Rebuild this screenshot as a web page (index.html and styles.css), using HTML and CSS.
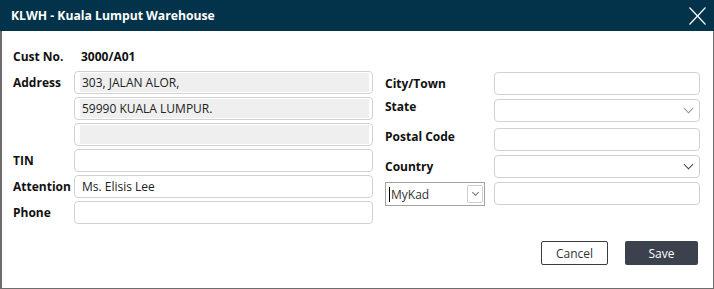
FILE: index.html
```html
<!DOCTYPE html>
<html lang="en">
<head>
  <meta charset="UTF-8" />
  <title>KLWH - Kuala Lumput Warehouse</title>
  <link rel="stylesheet" href="styles.css">
</head>
<body>
  <div class="dialog">
    <header class="titlebar">
      <h1>KLWH - Kuala Lumput Warehouse</h1>
      <button class="close" aria-label="Close">
        <svg width="17" height="18" viewBox="0 0 17 18">
          <path d="M0.5 0.5 L16.5 17.5 M16.5 0.5 L0.5 17.5" stroke="#fff" stroke-width="1.2" fill="none"/>
        </svg>
      </button>
    </header>

    <div class="content">
      <div class="col left">
        <label>Cust No.</label>
        <div class="value">3000/A01</div>

        <label>Address</label>
        <div class="field ro"><span>303, JALAN ALOR,</span></div>
        <div></div>
        <div class="field ro"><span>59990 KUALA LUMPUR.</span></div>
        <div></div>
        <div class="field ro"><span></span></div>

        <label>TIN</label>
        <div class="field"></div>
        <label>Attention</label>
        <div class="field">Ms. Elisis Lee</div>
        <label>Phone</label>
        <div class="field"></div>
      </div>

      <div class="col right">
        <label>City/Town</label>
        <div class="field"></div>
        <label class="top state">State</label>
        <div class="field select"><i class="chev light"></i></div>
        <label class="top">Postal Code</label>
        <div class="field"></div>
        <label>Country</label>
        <div class="field select"><i class="chev"></i></div>
        <div class="idtype">
          <span class="caret"></span>MyKad
          <span class="dropbtn"><i class="chev small"></i></span>
        </div>
        <div class="field"></div>
      </div>
    </div>

    <div class="actions">
      <button class="btn cancel">Cancel</button>
      <button class="btn save">Save</button>
    </div>
  </div>
</body>
</html>
```

FILE: styles.css
```css
body {
  margin: 0;
  font-family: "Open Sans", "Noto Sans", sans-serif;
  font-size: 12px;
  color: #111;
  background: #fff;
}

.dialog {
  width: 714px;
  height: 289px;
  box-sizing: border-box;
  border: 1px solid #6d6d6d;
  border-left-width: 2px;
  border-top: none;
  background: white;
}

.titlebar {
  height: 31px;
  background: #02334b;
  display: flex;
  align-items: center;
  justify-content: space-between;
  padding: 0 8px 0 11px;
  margin-left: -2px;
  margin-right: -1px;
}

.titlebar h1 {
  margin: 0;
  color: white;
  font-size: 12.2px;
  font-weight: bold;
}

.close {
  background: none;
  border: none;
  padding: 0;
  margin-top: 1px;
  display: flex;
}

.content {
  display: flex;
  padding: 14px 0 0 11px;
}

.col {
  display: grid;
  row-gap: 3px;
}

.left {
  grid-template-columns: 61px 299px;
  grid-auto-rows: 23px;
}

.right {
  margin-left: 12px;
  margin-top: 27px;
  grid-template-columns: 109px 206px;
  grid-template-rows: 23px 25px 23px 23px 24px;
  row-gap: 4px;
}

label {
  font-weight: bold;
  align-self: center;
}

label.top {
  align-self: start;
}

label.state {
  margin-top: -1px;
}

.value {
  font-weight: bold;
  align-self: center;
  padding-left: 7px;
}

.field {
  box-sizing: border-box;
  height: 23px;
  border: 1px solid #d0d3d6;
  border-radius: 4px;
  padding: 0 7px;
  display: flex;
  align-items: center;
  color: #222;
}

.right .field {
  align-self: start;
}

.field.ro {
  padding: 1px 3px 1px 5px;
}

.field.ro span {
  flex: 1;
  align-self: stretch;
  background: #efefef;
  padding-left: 2px;
  display: flex;
  align-items: center;
}

.select {
  justify-content: flex-end;
  padding-right: 5px;
}

.chev {
  width: 6px;
  height: 6px;
  border-right: 1px solid #3b4b58;
  border-bottom: 1px solid #3b4b58;
  transform: rotate(45deg);
  margin-top: -5px;
  margin-right: 2px;
}

.chev.light {
  border-color: #8c9aa6;
}

.idtype {
  box-sizing: border-box;
  width: 100px;
  border: 1px solid #a3a3a3;
  display: flex;
  align-items: center;
  padding-left: 3px;
  color: #333;
  position: relative;
}

.caret {
  width: 1px;
  height: 15px;
  background: #000;
  margin-right: 1px;
}

.dropbtn {
  position: absolute;
  right: 1px;
  top: 2px;
  width: 16px;
  height: 18px;
  box-sizing: border-box;
  border: 1px solid #cfcfcf;
  border-radius: 2px;
  display: flex;
  align-items: center;
  justify-content: center;
}

.chev.small {
  width: 4px;
  height: 4px;
  border-color: #777;
  margin: -3px 0 0 0;
}

.actions {
  display: flex;
  justify-content: flex-end;
  gap: 17px;
  padding: 17px 15px 0 0;
}

.btn {
  font-family: "Open Sans", "Noto Sans", sans-serif;
  font-size: 12px;
  height: 24px;
  border-radius: 2px;
  cursor: pointer;
}

.cancel {
  width: 67px;
  background: white;
  border: 1px solid #3c3c3c;
  color: #333;
}

.save {
  width: 73px;
  background: #3b414d;
  border: none;
  color: white;
}
```
